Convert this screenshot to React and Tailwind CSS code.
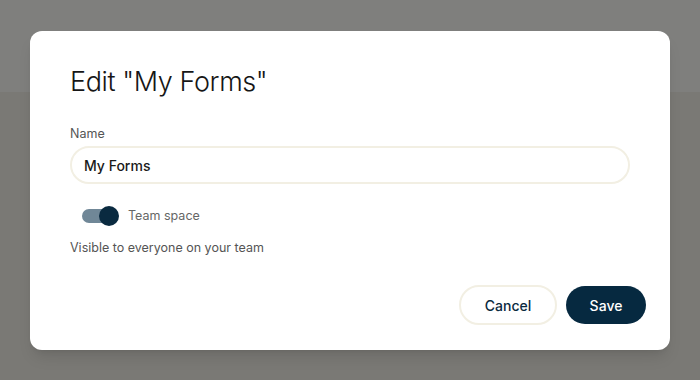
import React, { useState } from 'react';

const App = () => {
  const [teamSpace, setTeamSpace] = useState(true);

  return (
    <div className="relative w-[700px] h-[380px] overflow-hidden bg-[#7a7975]" style={{ fontFamily: 'Inter, "Open Sans", sans-serif' }}>
      {/* Dimmed page behind the dialog */}
      <div className="h-[92px] bg-[#7f7f7d]" />

      {/* Dialog */}
      <div className="absolute left-[30px] top-[31px] w-[640px] h-[319px] rounded-[12px] bg-white shadow-lg flex flex-col">
        <div className="px-10 pt-[34px]">
          <h2 className="text-[27px] leading-[34px] font-light text-[#161616] tracking-[-0.4px]">Edit "My Forms"</h2>

          <label className="block mt-[27px] text-[12.5px] leading-4 text-[#555]">Name</label>
          <input
            defaultValue="My Forms"
            className="mt-[4px] w-full h-[38px] rounded-full border-2 border-[#f2efe3] px-[12px] text-[14px] font-medium text-[#1a1a1a] outline-none"
          />

          <div className="mt-[22px] flex items-center gap-[9px] pl-[12px]">
            <button
              onClick={() => setTeamSpace(!teamSpace)}
              className="relative w-[37px] h-[20px] flex items-center"
            >
              <span className="block w-[32px] h-[14px] rounded-full bg-[#708797]" />
              <span className="absolute right-0 top-0 w-[20px] h-[20px] rounded-full bg-[#0a2a40]" />
            </button>
            <span className="text-[12.5px] text-[#666]">Team space</span>
          </div>

          <p className="mt-[13px] text-[12.5px] text-[#555]">Visible to everyone on your team</p>
        </div>

        <div className="mt-auto flex justify-end gap-[9px] px-6 pb-[25px]">
          <button className="h-[40px] w-[98px] rounded-full border-2 border-[#f2efe3] text-[14px] font-medium text-[#0a2a40]">
            Cancel
          </button>
          <button className="h-[38px] w-[80px] mt-px rounded-full bg-[#062940] text-[14px] font-medium text-white">
            Save
          </button>
        </div>
      </div>
    </div>
  );
};

export default App;
